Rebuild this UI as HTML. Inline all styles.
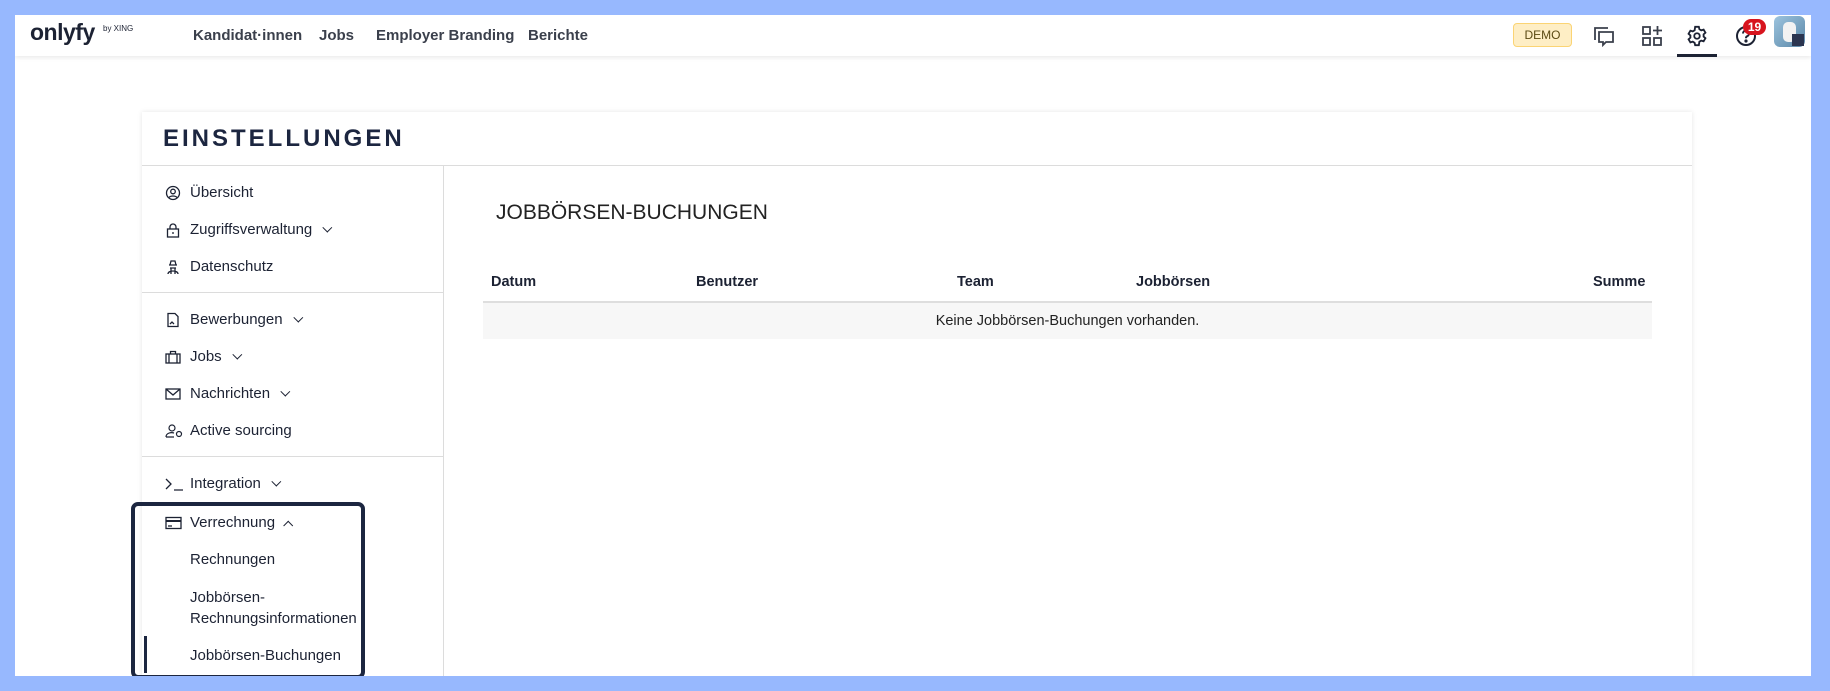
<!DOCTYPE html>
<html><head><meta charset="utf-8"><style>
*{margin:0;padding:0;box-sizing:border-box}
body{width:1830px;height:691px;background:#97b8fe;font-family:"Liberation Sans",sans-serif;position:relative;overflow:hidden;color:#1c2233}
#page{position:absolute;left:15px;top:15px;width:1796px;height:661px;background:#fff;overflow:hidden}
.hdr{position:absolute;left:0;top:0;width:100%;height:41px;background:#fff;box-shadow:0 2px 4px rgba(0,0,0,.08)}
.a{position:absolute;white-space:nowrap}
.nav{font-size:15px;font-weight:bold;color:#3b404c;top:12px}
.card{position:absolute;left:127px;top:97px;width:1550px;height:600px;background:#fff;box-shadow:0 0 5px rgba(0,0,0,.1)}
.si{position:absolute;left:48px;font-size:15px;color:#1c2233;white-space:nowrap}
.ic{position:absolute;left:23px;width:16px;height:16px}
.hr{position:absolute;left:0;width:301px;height:1px;background:#dcdcdc}
.th{position:absolute;top:162px;font-size:14.5px;font-weight:bold;color:#1c2233}
.chev{display:inline-block;margin-left:9px;width:7px;height:7px;border-right:1.8px solid #1c2233;border-bottom:1.8px solid #1c2233;transform:rotate(45deg) translateY(-4px)}
.chevu{transform:rotate(-135deg) translate(-2px,-1px)}
</style></head><body>
<div id="page">
<div class="hdr">
  <div class="a" style="left:15px;top:4px;font-size:23px;font-weight:bold;color:#1c2233;letter-spacing:-0.5px">onlyfy</div>
  <div class="a" style="left:88px;top:9px;font-size:8px;color:#1c2233">by XING</div>
  <div class="a nav" style="left:178px">Kandidat·innen</div>
  <div class="a nav" style="left:304px">Jobs</div>
  <div class="a nav" style="left:361px">Employer Branding</div>
  <div class="a nav" style="left:513px">Berichte</div>
  <div class="a" style="left:1498px;top:8px;width:59px;height:24px;background:#feeec5;border:1px solid #fbd474;border-radius:4px;font-size:12px;color:#5b4a14;text-align:center;line-height:22px">DEMO</div>
  <svg class="a" style="left:1578px;top:10px" width="22" height="22" viewBox="0 0 22 22" fill="none" stroke="#3b404c" stroke-width="1.8"><path d="M2 15V3h13"/><path d="M6 7h14v10h-7l-3 3v-3H6z"/></svg>
  <svg class="a" style="left:1626px;top:10px" width="22" height="22" viewBox="0 0 22 22" fill="none" stroke="#3b404c" stroke-width="1.8"><rect x="2" y="2" width="7" height="7"/><rect x="2" y="13" width="7" height="7"/><rect x="13" y="13" width="7" height="7"/><path d="M16.5 1v9M12 5.5h9"/></svg>
  <svg class="a" style="left:1671px;top:10px" width="22" height="22" viewBox="0 0 24 24" fill="none" stroke="#1c2233" stroke-width="2"><circle cx="12" cy="12" r="3"/><path d="M10 2h4l.6 2.6 2 1.2 2.6-.8 2 3.4-2 1.8v2.4l2 1.8-2 3.4-2.6-.8-2 1.2L14 22h-4l-.6-2.6-2-1.2-2.6.8-2-3.4 2-1.8v-2.4l-2-1.8 2-3.4 2.6.8 2-1.2z"/></svg>
  <div class="a" style="left:1662px;top:39px;width:40px;height:3px;background:#1c2233"></div>
  <svg class="a" style="left:1720px;top:10px" width="22" height="22" viewBox="0 0 22 22" fill="none" stroke="#1c2233" stroke-width="2"><circle cx="11" cy="11" r="9"/><path d="M8 8.5a3 3 0 1 1 4 2.8c-.8.4-1 1-1 2"/><circle cx="11" cy="16" r=".6" fill="#1c2233"/></svg>
  <div class="a" style="left:1728px;top:4px;width:23px;height:16px;border-radius:8px;background:#d7141e;color:#fff;font-size:12px;font-weight:bold;text-align:center;line-height:16px">19</div>
  <div class="a" style="left:1759px;top:1px;width:31px;height:31px;border-radius:6px;background:linear-gradient(135deg,#9cc4de,#5b87a8)"><div style="position:absolute;left:9px;top:6px;width:13px;height:20px;background:#f2f2f2;border-radius:5px"></div><div style="position:absolute;left:18px;top:18px;width:12px;height:12px;background:#2b3550"></div></div>
</div>
<div class="card">
  <div class="a" style="left:21px;top:13px;font-size:24px;font-weight:bold;letter-spacing:3px;color:#1c2640">EINSTELLUNGEN</div>
  <div class="a" style="left:0;top:53px;width:100%;height:1px;background:#dcdcdc"></div>
  <div class="a" style="left:301px;top:53px;width:1px;height:560px;background:#dcdcdc"></div>

  <svg class="ic" style="top:73px" viewBox="0 0 16 16" fill="none" stroke="#1c2233" stroke-width="1.3"><circle cx="8" cy="8" r="6.5"/><circle cx="8" cy="6.5" r="2.3"/><path d="M4 12.5c1.5-2 6.5-2 8 0"/></svg>
  <div class="si" style="top:72px">Übersicht</div>
  <svg class="ic" style="top:110px" viewBox="0 0 16 16" fill="none" stroke="#1c2233" stroke-width="1.3"><rect x="2.5" y="7" width="11" height="8"/><path d="M5 7V5a3 3 0 0 1 6 0v2M8 10v2"/></svg>
  <div class="si" style="top:109px">Zugriffsverwaltung<span class="chev"></span></div>
  <svg class="ic" style="top:147px" viewBox="0 0 16 16" fill="none" stroke="#1c2233" stroke-width="1.3"><path d="M4 6h8M5 6l1-4h4l1 4M5 9h6M3 15c0-4 10-4 10 0M6 9v6M10 9v6"/></svg>
  <div class="si" style="top:146px">Datenschutz</div>
  <div class="hr" style="top:180px"></div>

  <svg class="ic" style="top:200px" viewBox="0 0 16 16" fill="none" stroke="#1c2233" stroke-width="1.3"><path d="M3 1.5h7l3 3v10H3z"/><path d="M5 12l2-2 2 2"/></svg>
  <div class="si" style="top:199px">Bewerbungen<span class="chev"></span></div>
  <svg class="ic" style="top:237px" viewBox="0 0 16 16" fill="none" stroke="#1c2233" stroke-width="1.3"><rect x="1" y="5" width="14" height="9"/><path d="M5.5 5V2.5h5V5M4 5v9M12 5v9"/></svg>
  <div class="si" style="top:236px">Jobs<span class="chev"></span></div>
  <svg class="ic" style="top:274px" viewBox="0 0 16 16" fill="none" stroke="#1c2233" stroke-width="1.3"><rect x="1" y="3" width="14" height="10"/><path d="M1 3l7 6 7-6"/></svg>
  <div class="si" style="top:273px">Nachrichten<span class="chev"></span></div>
  <svg class="ic" style="top:311px;width:18px" viewBox="0 0 18 16" fill="none" stroke="#1c2233" stroke-width="1.2"><circle cx="7" cy="5" r="3"/><path d="M1 14c0-4 5-5 8-4M1 14h8"/><circle cx="14" cy="11" r="2.5"/></svg>
  <div class="si" style="top:310px">Active sourcing</div>
  <div class="hr" style="top:344px"></div>

  <svg class="ic" style="top:364px;width:19px" viewBox="0 0 19 16" fill="none" stroke="#1c2233" stroke-width="1.3"><path d="M1 3l5 5-5 5M9 14h9"/></svg>
  <div class="si" style="top:363px">Integration<span class="chev"></span></div>
  <svg class="ic" style="top:403px;width:17px" viewBox="0 0 17 16" fill="none" stroke="#1c2233" stroke-width="1.3"><rect x="1" y="2.5" width="15" height="11"/><path d="M1 6h15" stroke-width="2"/><path d="M3 11h4"/></svg>
  <div class="si" style="top:402px">Verrechnung<span class="chev chevu"></span></div>
  <div class="si" style="top:439px">Rechnungen</div>
  <div class="si" style="top:475px;line-height:21px">Jobbörsen-<br>Rechnungsinformationen</div>
  <div class="si" style="top:535px">Jobbörsen-Buchungen</div>
  <div class="a" style="left:2px;top:524px;width:3px;height:37px;background:#1c2640"></div>
  <div class="a" style="left:-11px;top:390px;width:234px;height:177px;border:4px solid #1c2640;border-radius:7px"></div>

  <div class="a" style="left:354px;top:89px;font-size:21px;color:#222">JOBBÖRSEN-BUCHUNGEN</div>
  <div class="th" style="left:349px">Datum</div>
  <div class="th" style="left:554px">Benutzer</div>
  <div class="th" style="left:815px">Team</div>
  <div class="th" style="left:994px">Jobbörsen</div>
  <div class="th" style="left:1451px">Summe</div>
  <div class="a" style="left:341px;top:189px;width:1169px;height:2px;background:#dedede"></div>
  <div class="a" style="left:341px;top:191px;width:1169px;height:36px;background:#f7f7f7;font-size:14.5px;color:#222;text-align:center;line-height:36px">Keine Jobbörsen-Buchungen vorhanden.</div>
</div>
</div>
</body></html>
